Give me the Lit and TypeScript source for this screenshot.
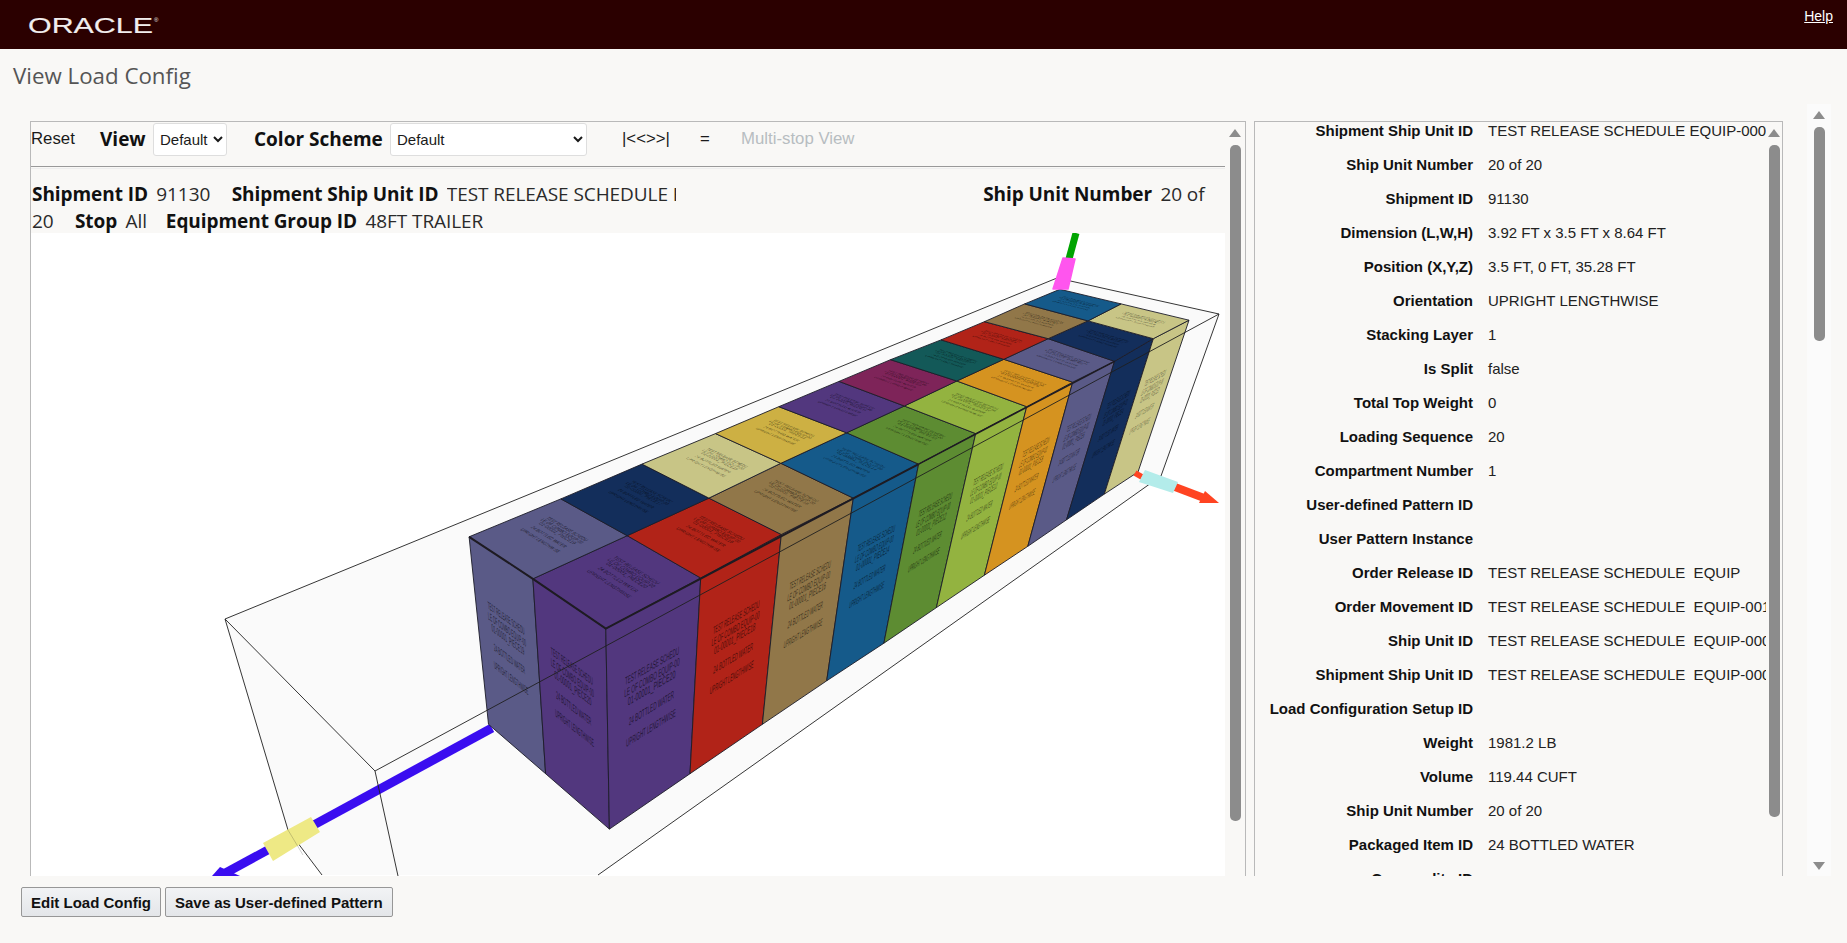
import { LitElement, html, svg, css } from "lit";
import { customElement } from "lit/decorators.js";

type Pt = [number, number];

// box corners were read off a zoomed crop, so convert them to page pixels
const z = (p: Pt): Pt => [440 + p[0] / 1.96, 230 + p[1] / 2.529];
const lerp = (a: Pt, b: Pt, t: number): Pt => [a[0] + (b[0] - a[0]) * t, a[1] + (b[1] - a[1]) * t];
const pts = (list: Pt[]) => list.map((p) => `${p[0].toFixed(1)},${p[1].toFixed(1)}`).join(" ");

const T: Pt[] = [[325, 1008], [511, 880], [669, 770], [810, 678], [938, 592], [1050, 515], [1150, 447], [1240, 385], [1322, 332], [1398, 275], [1468, 228]].map((p) => z(p as Pt));
const B: Pt[] = [[332, 1515], [490, 1375], [632, 1250], [758, 1140], [870, 1045], [973, 955], [1067, 873], [1152, 800], [1228, 733], [1302, 668], [1368, 612]].map((p) => z(p as Pt));
const M: Pt[] = [[182, 882], [367, 773], [527, 678], [668, 590], [797, 513], [910, 445], [1013, 382], [1105, 327], [1192, 275], [1270, 230], [1335, 187]].map((p) => z(p as Pt));
const F: Pt[] = [[57, 776], [237, 680], [396, 592], [540, 515], [664, 447], [782, 383], [883, 328], [982, 278], [1067, 232], [1146, 187], [1215, 150]].map((p) => z(p as Pt));
const LB: Pt = z([95, 1250]);
const MB: Pt = z([207, 1375]);

const frontColors = ["#52377e", "#b12318", "#917749", "#155a8a", "#5d8c32", "#93b340", "#d59320", "#5a5a87", "#132e5b", "#c8c586"];
const backColors = ["#5a5a87", "#132e5b", "#c8c586", "#cdb043", "#52377e", "#7e2459", "#135958", "#b12318", "#917749", "#155a8a"];

const LINE_V = [0.335, 0.394, 0.446, 0.548, 0.648];
const LINE_W = [60, 62, 54, 52, 58];

// one label per face, stretched over the quad like a texture
function label(tl: Pt, tr: Pt, bl: Pt, br: Pt, piece: number, k: number) {
  const lines = ["TEST RELEASE SCHEDU", "LE OF COMBO EQUIP-00", `01-00001_PIECE${piece}`, "24 BOTTLED WATER", "UPRIGHT LENGTHWISE"];
  return lines.map((text, i) => {
    const l = lerp(tl, bl, LINE_V[i] * k);
    const r = lerp(tr, br, LINE_V[i] * k);
    const vx = ((bl[0] - tl[0] + br[0] - tr[0]) / 2) / 100;
    const vy = ((bl[1] - tl[1] + br[1] - tr[1]) / 2) / 100;
    const m = [(r[0] - l[0]) / 100, (r[1] - l[1]) / 100, vx, vy, l[0], l[1]].map((n) => n.toFixed(3)).join(" ");
    return svg`<text class="tex" transform="matrix(${m})" x="50" y="0" text-anchor="middle" textLength=${LINE_W[i]} lengthAdjust="spacingAndGlyphs">${text}</text>`;
  });
}

function face(tl: Pt, tr: Pt, br: Pt, bl: Pt, color: string, piece: number, k = 1) {
  return svg`<polygon points=${pts([tl, tr, br, bl])} fill=${color} stroke="#1c1c28" stroke-width="0.9" stroke-linejoin="round"></polygon>${label(tl, tr, bl, br, piece, k)}`;
}

function renderBoxes() {
  const out: unknown[] = [];
  // far side of the slate box and the purple box first
  out.push(face(F[0], M[0], MB, LB, "#5a5a87", 19));
  out.push(face(M[0], T[0], B[0], MB, "#52377e", 20));
  for (let i = 0; i < 10; i++) {
    out.push(face(T[i], T[i + 1], B[i + 1], B[i], frontColors[i], 20 - 2 * i));
  }
  for (let i = 0; i < 10; i++) {
    out.push(face(M[i + 1], T[i + 1], T[i], M[i], frontColors[i], 20 - 2 * i, 0.92));
    out.push(face(F[i + 1], M[i + 1], M[i], F[i], backColors[i], 19 - 2 * i, 0.92));
  }
  return out;
}

const A: Pt = [225, 619];
const Bk: Pt = [1057, 278];
const C: Pt = [375, 771];
const D: Pt = [1219, 314];
const E: Pt = [288, 830];
const G: Pt = [1161, 476];

const rows: [string, string][] = [
  ["Shipment Ship Unit ID", "TEST RELEASE SCHEDULE EQUIP-000"],
  ["Ship Unit Number", "20 of 20"],
  ["Shipment ID", "91130"],
  ["Dimension (L,W,H)", "3.92 FT x 3.5 FT x 8.64 FT"],
  ["Position (X,Y,Z)", "3.5 FT, 0 FT, 35.28 FT"],
  ["Orientation", "UPRIGHT LENGTHWISE"],
  ["Stacking Layer", "1"],
  ["Is Split", "false"],
  ["Total Top Weight", "0"],
  ["Loading Sequence", "20"],
  ["Compartment Number", "1"],
  ["User-defined Pattern ID", ""],
  ["User Pattern Instance", ""],
  ["Order Release ID", "TEST RELEASE SCHEDULE  EQUIP"],
  ["Order Movement ID", "TEST RELEASE SCHEDULE  EQUIP-001"],
  ["Ship Unit ID", "TEST RELEASE SCHEDULE  EQUIP-000"],
  ["Shipment Ship Unit ID", "TEST RELEASE SCHEDULE  EQUIP-000"],
  ["Load Configuration Setup ID", ""],
  ["Weight", "1981.2 LB"],
  ["Volume", "119.44 CUFT"],
  ["Ship Unit Number", "20 of 20"],
  ["Packaged Item ID", "24 BOTTLED WATER"],
  ["Commodity ID", ""],
];

@customElement("app-root")
export class AppRoot extends LitElement {
  static styles = css`
    :host {
      display: block;
      height: 943px;
      overflow: hidden;
      background: #f9f8f6;
      font-family: "Liberation Sans", Arial, sans-serif;
      color: #1a1a1a;
    }
    * { box-sizing: border-box; }
    .brand {
      height: 49px;
      background: #2b0000;
      display: flex;
      justify-content: space-between;
      padding: 0 14px 0 28px;
    }
    .logo { display: block; margin-top: 14px; }
    .logo text { font-family: "Liberation Sans", Arial, sans-serif; fill: #f1eeee; }
    .logo .word { stroke: #f1eeee; stroke-width: 0.15; }
    .help {
      color: #fff;
      font-size: 14px;
      line-height: 16px;
      margin-top: 8px;
      text-decoration: underline;
    }
    .title {
      height: 55px;
      display: flex;
      align-items: center;
      padding: 0 0 2px 13px;
      font: 500 22.3px "Open Sans", sans-serif;
      color: #555;
    }
    .main {
      height: 772px;
      display: flex;
      padding-left: 30px;
    }
    .panel {
      margin-top: 17px;
      display: flex;
      overflow: hidden;
      border: 1px solid #b9b9b9;
      border-bottom: none;
    }
    .left { width: 1216px; }
    .right { width: 529px; margin-left: 8px; }
    .content {
      width: 1194px;
      display: flex;
      flex-direction: column;
    }
    .toolbar {
      height: 45px;
      flex: none;
      display: flex;
      align-items: center;
      padding-bottom: 10px;
      font-size: 16.8px;
      border-bottom: 1px solid #999;
    }
    .toolbar b {
      font: 700 19px "Open Sans", sans-serif;
      color: #111;
    }
    .toolbar select {
      height: 33px;
      font: 15px "Liberation Sans", Arial, sans-serif;
      color: #1a1a1a;
      background-color: #fff;
      border: 1px solid #dedede;
      border-radius: 3px;
      padding-left: 2px;
    }
    .reset { width: 69px; }
    .view-label { width: 53px; }
    .view-select { width: 74px; margin-right: 27px; }
    .scheme-label { width: 136px; }
    .scheme-select { width: 197px; margin-right: 35px; }
    .stops { width: 78px; }
    .eq { width: 41px; }
    .multi { color: #b7bdc1; }
    .info {
      height: 65px;
      flex: none;
      padding: 12px 0 0 1px;
      margin-top: 1px;
      border-top: 1px solid #eee;
      font: 400 19px/27px "Open Sans", sans-serif;
      letter-spacing: -0.07px;
      color: #2a2a2a;
    }
    .info b { color: #111; font-weight: 700; margin-right: 3.5px; }
    .info .g { margin-right: 16.5px; }
    .info .tight { margin-right: 14px; }
    .clip {
      display: inline-block;
      width: 515px;
      height: 27px;
      vertical-align: top;
    }
    .clip span {
      display: block;
      width: 229px;
      overflow: hidden;
      white-space: nowrap;
    }
    .scene { flex: 1; min-height: 0; background: #fff; }
    .scene svg { display: block; width: 100%; height: 100%; }
    .wire { stroke: #1f1f1f; stroke-width: 0.9; fill: none; }
    .tex {
      font: 400 5.6px "Liberation Sans", Arial, sans-serif;
      fill: #000;
      fill-opacity: 0.62;
      text-rendering: geometricPrecision;
    }
    .sb {
      flex: none;
      width: 20px;
      display: flex;
      flex-direction: column;
      align-items: center;
      padding-top: 7px;
    }
    .right .sb { width: 16px; background: #f9f8f6; }
    .up, .down {
      flex: none;
      width: 0;
      height: 0;
      border-left: 6px solid transparent;
      border-right: 6px solid transparent;
    }
    .up { border-bottom: 8px solid #8c8c8c; }
    .down { border-top: 8px solid #8c8c8c; }
    .thumb {
      flex: none;
      width: 11px;
      margin-top: 8px;
      background: #8c8c8c;
      border-radius: 5px;
    }
    .left .thumb { height: 676px; }
    .right .thumb { height: 672px; }
    .list {
      width: 511px;
      flex: none;
      margin-top: -8px;
      overflow: hidden;
      font-size: 15px;
      line-height: 34px;
    }
    .row { display: flex; height: 34px; white-space: pre; }
    .row b {
      width: 218px;
      flex: none;
      text-align: right;
      color: #111;
    }
    .row span { margin-left: 15px; color: #222; }
    .outer {
      flex: none;
      width: 24px;
      margin-left: 24px;
      background: #fbfbfb;
      display: flex;
      flex-direction: column;
      align-items: center;
      padding-top: 7px;
    }
    .outer .thumb { height: 214px; }
    .outer .gap { flex: 1; }
    .outer .down { margin-bottom: 6px; }
    .footer {
      display: flex;
      gap: 4px;
      padding: 11px 0 0 21px;
    }
    .footer button {
      height: 30px;
      padding: 0 9px;
      font: 700 15px "Liberation Sans", Arial, sans-serif;
      color: #111;
      background: linear-gradient(#f2f3f5, #e4e6e9);
      border: 1px solid #979797;
      border-radius: 2px;
    }
  `;

  private scrollbar() {
    return html`<div class="sb"><div class="up"></div><div class="thumb"></div></div>`;
  }

  private scene() {
    return html`<svg viewBox="31 233 1194 643" preserveAspectRatio="none">
      <polygon points=${pts([A, Bk, D, G, [598, 875], [322, 875], E])} fill="#fafafa"></polygon>

      <line x1="492" y1="728" x2="220" y2="876" stroke="#3a0df0" stroke-width="9"></line>
      <polygon points="212,876 220,867 240,876" fill="#3a0df0"></polygon>

      ${renderBoxes()}

      <polyline points=${pts([F[0], M[0], T[0], T[4]])} fill="none" stroke="#1e1b22" stroke-width="2"></polyline>
      <polyline points=${pts([T[4], T[8]])} fill="none" stroke="#1e1b22" stroke-width="1.5"></polyline>

      <g class="wire">
        <polyline points=${pts([Bk, A, C, D, Bk])}></polyline>
        <polyline points=${pts([A, E, [322, 875]])}></polyline>
        <line x1="375" y1="771" x2="398" y2="876"></line>
        <polyline points=${pts([D, G, [598, 875]])}></polyline>
      </g>

      <line x1="1076" y1="233" x2="1069" y2="259" stroke="#00a400" stroke-width="7"></line>
      <polygon points="1063,258 1075,259 1068,289 1053,289" fill="#ff55ee" stroke="#ff55ee" stroke-width="1.5" stroke-linejoin="round"></polygon>

      <line x1="1135" y1="473" x2="1142" y2="477" stroke="#ff4422" stroke-width="6"></line>
      <line x1="1175" y1="487" x2="1204" y2="498" stroke="#ff4422" stroke-width="8"></line>
      <polygon points="1205,491 1219,503 1199,503" fill="#ff4422"></polygon>
      <polygon points="1145,470 1178,482 1173,493 1139,482" fill="#b3ecea"></polygon>

      <polygon points="263,843 273,861 320,832 311,817" fill="#eee985"></polygon>
      <line x1="288" y1="830" x2="303" y2="855" stroke="#1f1f1f" stroke-width="0.6" stroke-opacity="0.35"></line>
    </svg>`;
  }

  render() {
    return html`
      <div class="brand">
        <svg class="logo" width="134" height="22" viewBox="0 0 134 22">
          <text class="word" x="0" y="19" font-size="22" textLength="125" lengthAdjust="spacingAndGlyphs">ORACLE</text>
          <text x="126" y="8" font-size="6">®</text>
        </svg>
        <a class="help">Help</a>
      </div>
      <div class="title">View Load Config</div>
      <div class="main">
        <div class="panel left">
          <div class="content">
            <div class="toolbar">
              <span class="reset">Reset</span>
              <b class="view-label">View</b>
              <select class="view-select"><option>Default</option></select>
              <b class="scheme-label">Color Scheme</b>
              <select class="scheme-select"><option>Default</option></select>
              <span class="stops">|&lt;&lt;&gt;&gt;|</span>
              <span class="eq">=</span>
              <span class="multi">Multi-stop View</span>
            </div>
            <div class="info">
              <span class="g"><b>Shipment ID</b> 91130</span>
              <span class="g"><b>Shipment Ship Unit ID</b>
                <span class="clip"><span>TEST RELEASE SCHEDULE EQUIP</span></span></span>
              <span class="g"><b>Ship Unit Number</b> 20 of 20</span>
              <span class="tight"><b>Stop</b> All</span>
              <span><b>Equipment Group ID</b> 48FT TRAILER</span>
            </div>
            <div class="scene">${this.scene()}</div>
          </div>
          ${this.scrollbar()}
        </div>
        <div class="panel right">
          <div class="list">
            ${rows.map(([k, v]) => html`<div class="row"><b>${k}</b><span>${v}</span></div>`)}
          </div>
          ${this.scrollbar()}
        </div>
        <div class="outer">
          <div class="up"></div>
          <div class="thumb"></div>
          <div class="gap"></div>
          <div class="down"></div>
        </div>
      </div>
      <div class="footer">
        <button>Edit Load Config</button>
        <button>Save as User-defined Pattern</button>
      </div>
    `;
  }
}
